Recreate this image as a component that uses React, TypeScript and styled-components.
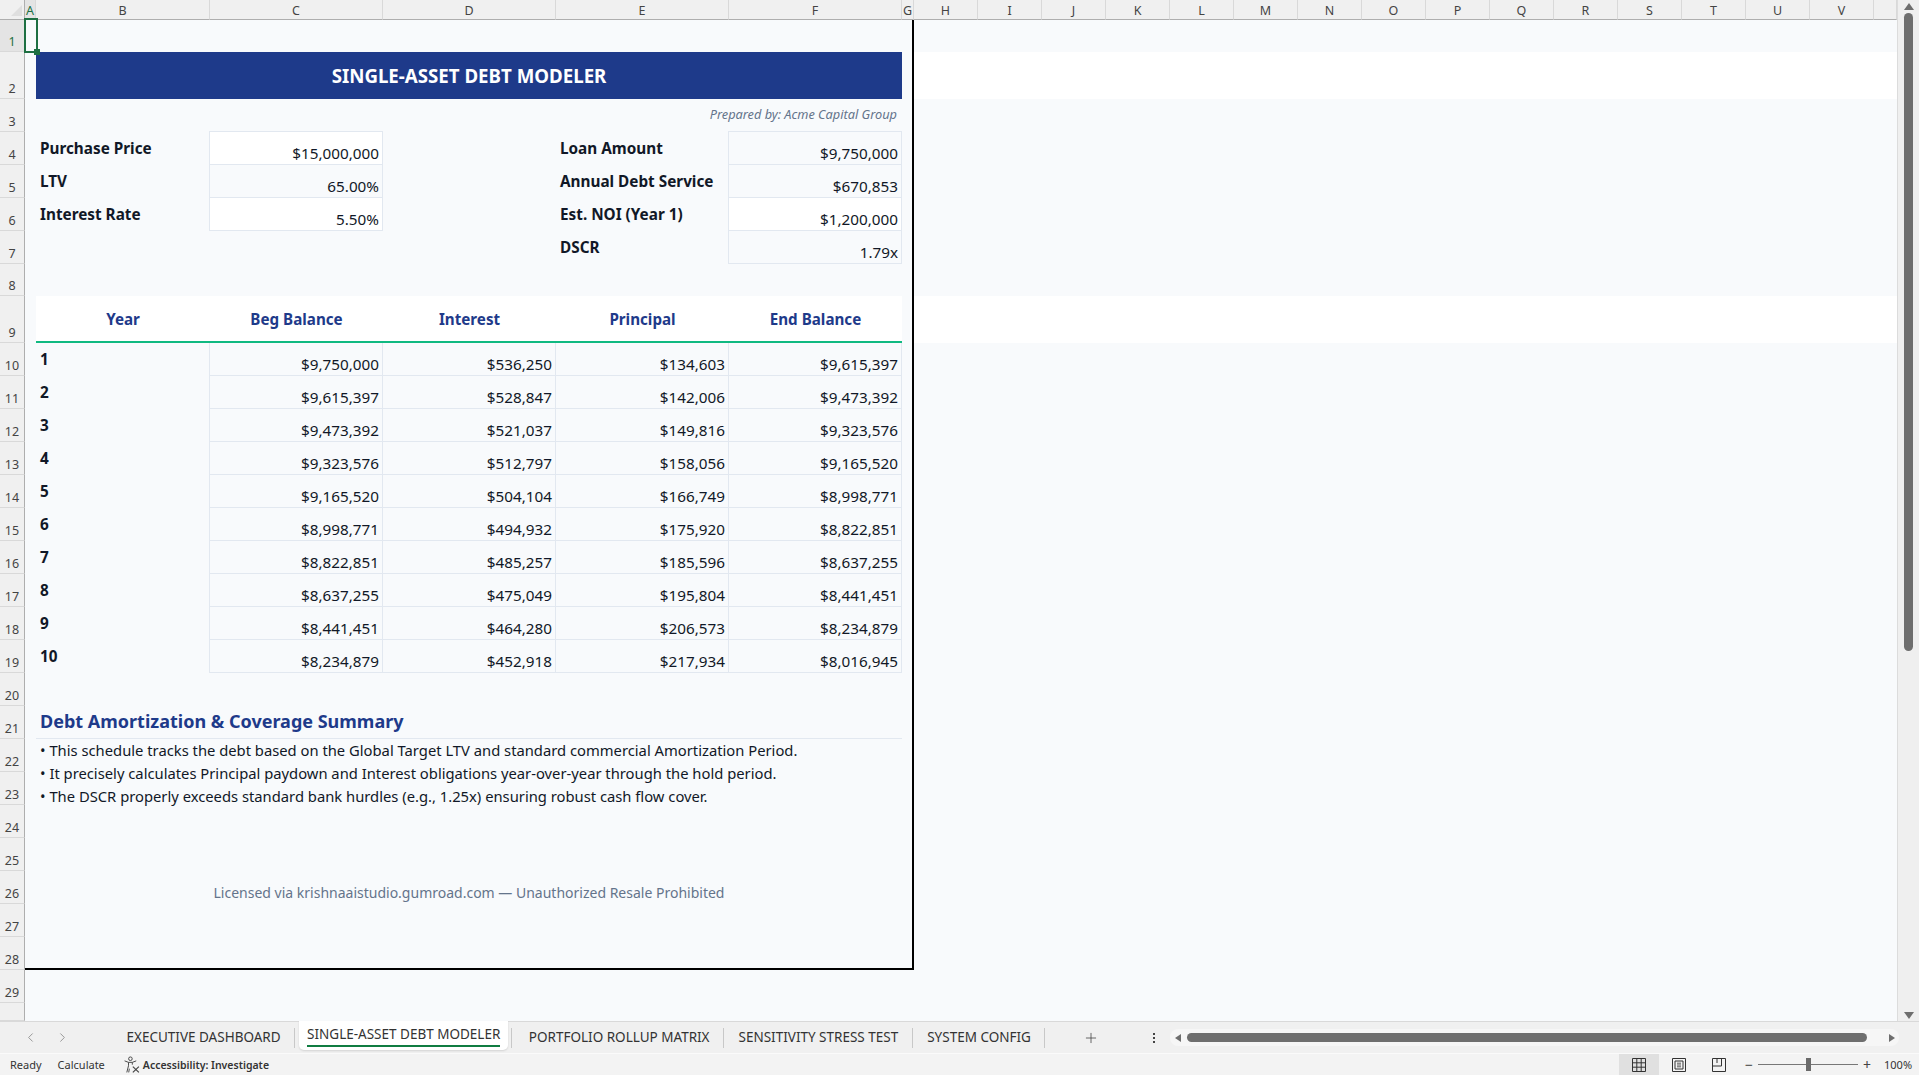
import { FC, ReactNode } from 'react';
import styled, { createGlobalStyle, css } from 'styled-components';
import { ChevronLeft, ChevronRight, Plus } from 'lucide-react';

const FONT = '"Noto Sans", "Open Sans", sans-serif';

const LETTERS = ['A', 'B', 'C', 'D', 'E', 'F', 'G', 'H', 'I', 'J', 'K', 'L', 'M', 'N', 'O', 'P', 'Q', 'R', 'S', 'T', 'U', 'V', ''];

// sheet row heights, row 1 first
const ROW_HEIGHTS = [32, 47, 33, 33, 33, 33, 33, 32, 47, 33, 33, 33, 33, 33, 33, 33, 33, 33, 33, 33, 33, 33, 33, 33, 33, 33, 33, 33, 33, 18];

const INPUTS_LEFT = [
  { row: 4, label: 'Purchase Price', value: '$15,000,000', white: true },
  { row: 5, label: 'LTV', value: '65.00%', white: false },
  { row: 6, label: 'Interest Rate', value: '5.50%', white: true },
];

const INPUTS_RIGHT = [
  { row: 4, label: 'Loan Amount', value: '$9,750,000', white: false },
  { row: 5, label: 'Annual Debt Service', value: '$670,853', white: false },
  { row: 6, label: 'Est. NOI (Year 1)', value: '$1,200,000', white: true },
  { row: 7, label: 'DSCR', value: '1.79x', white: false },
];

const HEADERS = ['Year', 'Beg Balance', 'Interest', 'Principal', 'End Balance'];

const SCHEDULE = [
  ['$9,750,000', '$536,250', '$134,603', '$9,615,397'],
  ['$9,615,397', '$528,847', '$142,006', '$9,473,392'],
  ['$9,473,392', '$521,037', '$149,816', '$9,323,576'],
  ['$9,323,576', '$512,797', '$158,056', '$9,165,520'],
  ['$9,165,520', '$504,104', '$166,749', '$8,998,771'],
  ['$8,998,771', '$494,932', '$175,920', '$8,822,851'],
  ['$8,822,851', '$485,257', '$185,596', '$8,637,255'],
  ['$8,637,255', '$475,049', '$195,804', '$8,441,451'],
  ['$8,441,451', '$464,280', '$206,573', '$8,234,879'],
  ['$8,234,879', '$452,918', '$217,934', '$8,016,945'],
];

const TABS = ['EXECUTIVE DASHBOARD', 'SINGLE-ASSET DEBT MODELER', 'PORTFOLIO ROLLUP MATRIX', 'SENSITIVITY STRESS TEST', 'SYSTEM CONFIG'];

const GlobalStyle = createGlobalStyle`
  html, body {
    margin: 0;
    padding: 0;
    overflow: hidden;
    background: #f0f0f0;
  }
  * {
    box-sizing: border-box;
  }
`;

const Window = styled.div`
  width: 1919px;
  height: 1075px;
  display: flex;
  flex-direction: column;
  overflow: hidden;
  font-family: ${FONT};
  color: #111827;
`;

const Workspace = styled.div`
  height: 1021px;
  display: flex;
`;

const Sheet = styled.div`
  position: relative;
  width: 1897px;
  height: 1021px;
  display: grid;
  grid-template-columns: 25px 11px 174px 173px 173px 173px 173px 12px repeat(15, 64px) 23px;
  grid-template-rows: 20px ${ROW_HEIGHTS.map((h) => `${h}px`).join(' ')};
  background: #f8fafc;
  overflow: hidden;
`;

interface AtProps {
  $row: number;
  $col?: number;
  $span?: number;
  $rows?: number;
}

// $row is the sheet row, $col counts from A = 1
const at = css<AtProps>`
  grid-row: ${({ $row, $rows = 1 }) => `${$row + 1} / span ${$rows}`};
  grid-column: ${({ $col = 1, $span = 1 }) => `${$col + 1} / span ${$span}`};
  min-width: 0;
`;

const Corner = styled.div`
  grid-row: 1;
  grid-column: 1;
  background: #f0f0f0;
  border-bottom: 1px solid #aeaeae;
  border-right: 1px solid #aeaeae;
  display: flex;
  align-items: flex-end;
  justify-content: flex-end;
  padding: 0 2px 3px 0;
`;

const CornerMark = styled.div`
  width: 0;
  height: 0;
  border-style: solid;
  border-width: 0 0 11px 11px;
  border-color: transparent transparent #dfdfdf transparent;
`;

const ColHead = styled.div<{ $index: number; $active?: boolean }>`
  grid-row: 1;
  grid-column: ${({ $index }) => $index + 2};
  display: flex;
  align-items: center;
  justify-content: center;
  padding-top: 2px;
  font-size: 12.5px;
  line-height: 18px;
  color: ${({ $active }) => ($active ? '#1d7044' : '#444')};
  background: ${({ $active }) => ($active ? '#e4e4e4' : '#f0f0f0')};
  border-bottom: 1px solid #aeaeae;
  border-right: 1px solid #d9d9d9;
  overflow: hidden;
`;

const RowHead = styled.div<{ $row: number; $active?: boolean }>`
  grid-row: ${({ $row }) => $row + 1};
  grid-column: 1;
  display: flex;
  align-items: flex-end;
  justify-content: center;
  padding-bottom: 1px;
  font-size: 12.5px;
  line-height: 17px;
  color: ${({ $active }) => ($active ? '#1d7044' : '#444')};
  background: ${({ $active }) => ($active ? '#e4e4e4' : '#f0f0f0')};
  border-right: 1px solid #aeaeae;
  border-bottom: 1px solid #d9d9d9;
`;

const ModelFrame = styled.div`
  grid-row: 2 / span 28;
  grid-column: 2 / span 7;
  border-right: 2px solid #000;
  border-bottom: 2px solid #000;
`;

const WhiteBand = styled.div<{ $row: number }>`
  grid-row: ${({ $row }) => $row + 1};
  grid-column: 9 / -1;
  background: #fff;
`;

const Selection = styled.div`
  position: absolute;
  left: 24px;
  top: 18px;
  width: 14px;
  height: 35px;
  border: 2px solid #1d6f42;
`;

const SelectionHandle = styled.div`
  position: absolute;
  right: -4px;
  bottom: -4px;
  width: 6px;
  height: 6px;
  background: #1d6f42;
`;

const Title = styled.div<AtProps>`
  ${at};
  display: flex;
  align-items: center;
  justify-content: center;
  padding-bottom: 1px;
  background: #1e3a8a;
  color: #fff;
  font-size: 18.7px;
  font-weight: 700;
`;

const Prepared = styled.div<AtProps>`
  ${at};
  display: flex;
  align-items: center;
  justify-content: flex-end;
  padding: 0 5px 3px 0;
  color: #64748b;
  font-size: 12.75px;
  font-style: italic;
`;

const Label = styled.div<AtProps>`
  ${at};
  display: flex;
  align-items: center;
  padding: 0 0 1px 4px;
  font-size: 15.3px;
  font-weight: 700;
  white-space: nowrap;
`;

const Value = styled.div<AtProps & { $white?: boolean }>`
  ${at};
  display: flex;
  align-items: flex-end;
  justify-content: flex-end;
  margin-left: -1px;
  padding-right: 3px;
  font-size: 15.25px;
  line-height: 21px;
  background: ${({ $white }) => ($white ? '#fff' : '#f8fafc')};
  border: 1px solid #e2e8f0;
  border-top: 0;
`;

const TopRule = styled.div<AtProps>`
  ${at};
  height: 1px;
  margin: -1px 0 0 -1px;
  background: #e2e8f0;
  align-self: start;
`;

const TableHead = styled.div<AtProps>`
  ${at};
  display: flex;
  align-items: center;
  justify-content: center;
  background: #fff;
  border-bottom: 2px solid #10b981;
  color: #1e3a8a;
  font-size: 15.2px;
  font-weight: 700;
`;

const SummaryTitle = styled.div<AtProps>`
  ${at};
  display: flex;
  align-items: center;
  padding: 0 0 2px 4px;
  color: #1e3a8a;
  font-size: 18px;
  font-weight: 700;
  border-bottom: 1px solid #e2e8f0;
`;

const Notes = styled.div<AtProps>`
  ${at};
  padding-left: 4px;
  font-size: 14.78px;
  line-height: 23px;
  white-space: nowrap;
`;

const Licence = styled.div<AtProps>`
  ${at};
  display: flex;
  align-items: flex-end;
  justify-content: center;
  padding-bottom: 1px;
  color: #64748b;
  font-size: 14px;
  line-height: 21px;
`;

const VScroll = styled.div`
  flex: 1;
  display: flex;
  flex-direction: column;
  align-items: center;
  background: #efefef;
  border-left: 1px solid #dcdcdc;
  padding: 3px 0 2px;
`;

const VThumb = styled.div`
  width: 9px;
  height: 638px;
  margin-top: 3px;
  border-radius: 5px;
  background: #6e6e6e;
`;

const VSpacer = styled.div`
  flex: 1;
`;

const TabBar = styled.div`
  height: 32px;
  display: flex;
  align-items: stretch;
  position: relative;
  background: #f0f0f0;
  border-top: 1px solid #d9d9d9;
  font-size: 13.5px;
  color: #333;
`;

const TabArrows = styled.div`
  width: 112px;
  padding-left: 23px;
  display: flex;
  align-items: center;
  gap: 17px;
  color: #8c8c8c;
`;

const Tab = styled.div<{ $active?: boolean }>`
  position: relative;
  display: flex;
  align-items: center;
  padding: 0 14.5px 1px;
  white-space: nowrap;
  &::after {
    content: '';
    position: absolute;
    right: 0;
    top: 6px;
    height: 20px;
    width: 1px;
    background: #c8c8c8;
  }
  ${({ $active }) =>
    $active &&
    css`
      height: 29px;
      margin: -1px 6px 0 4px;
      padding: 0 8px;
      background: #fff;
      border-radius: 0 0 5px 5px;
      box-shadow: 0 1px 2px rgba(0, 0, 0, 0.12);
      &::after {
        right: -4px;
        top: 7px;
      }
    `}
`;

const ActiveLabel = styled.span`
  display: block;
  line-height: 21px;
  border-bottom: 2px solid #107c41;
`;

const TabPlus = styled.div`
  width: 92px;
  display: flex;
  align-items: center;
  justify-content: center;
  color: #444;
`;

const TabDots = styled.div`
  width: 34px;
  display: flex;
  flex-direction: column;
  align-items: center;
  justify-content: center;
  gap: 2px;
`;

const Dot = styled.span`
  width: 2px;
  height: 2px;
  background: #444;
`;

const HScrollTrack = styled.div`
  position: absolute;
  left: 1170px;
  top: 7px;
  width: 729px;
  height: 17px;
  display: flex;
  align-items: center;
  border-radius: 8px;
  background: #f6f6f6;
`;

const HThumb = styled.div`
  position: absolute;
  left: 17px;
  width: 680px;
  height: 9px;
  border-radius: 5px;
  background: #6e6e6e;
`;

const ArrowH = styled.div<{ $right?: boolean }>`
  position: absolute;
  ${({ $right }) => ($right ? 'right: 4px;' : 'left: 5px;')}
  width: 0;
  height: 0;
  border-style: solid;
  border-width: 4.5px 0 4.5px 6px;
  border-color: transparent transparent transparent #6e6e6e;
  ${({ $right }) => !$right && 'transform: scaleX(-1);'}
`;

const ArrowV = styled.div<{ $down?: boolean }>`
  width: 0;
  height: 0;
  flex: none;
  border-style: solid;
  border-width: 0 5.5px 7px 5.5px;
  border-color: transparent transparent #6e6e6e transparent;
  ${({ $down }) => $down && 'transform: scaleY(-1);'}
`;

const StatusBar = styled.div`
  height: 22px;
  display: flex;
  align-items: center;
  background: #f3f3f3;
  border-top: 1px solid #fafafa;
  font-size: 11px;
  color: #333;
`;

const StatusText = styled.span<{ $left: number; $bold?: boolean }>`
  margin-left: ${({ $left }) => $left}px;
  font-size: ${({ $bold }) => ($bold ? 10.5 : 11)}px;
  font-weight: ${({ $bold }) => ($bold ? 600 : 400)};
  white-space: nowrap;
`;

const StatusRight = styled.div`
  margin-left: auto;
  height: 100%;
  display: flex;
  align-items: center;
`;

const ViewButton = styled.div<{ $active?: boolean }>`
  width: 40px;
  height: 100%;
  display: flex;
  align-items: center;
  justify-content: center;
  background: ${({ $active }) => ($active ? '#e0e0e0' : 'transparent')};
`;

const ZoomControl = styled.div`
  width: 128px;
  margin-left: 6px;
  padding-right: 2px;
  display: flex;
  align-items: center;
  justify-content: space-between;
  font-size: 14px;
  color: #444;
`;

const ZoomTrack = styled.div`
  position: relative;
  width: 100px;
  height: 1px;
  background: #777;
`;

const ZoomThumb = styled.div`
  position: absolute;
  left: 48px;
  top: -6px;
  width: 5px;
  height: 13px;
  background: #6a6a6a;
`;

const ZoomValue = styled.span`
  width: 35px;
  margin-left: 11px;
  white-space: nowrap;
`;

const AccessibilityIcon: FC = () => (
  <svg width="18" height="18" viewBox="0 0 17 17" fill="none" stroke="#444" strokeWidth="0.9" style={{ marginLeft: 18 }}>
    <circle cx="7" cy="2.6" r="1.7" />
    <path d="M1.5 4.6 L5.2 6 H8.8 L12.5 4.6" />
    <path d="M5.2 6 V9.2 L3.6 15.5 M8.8 6 V8.2" />
    <path d="M9.3 10 L15 15.5 M15 10 L9.3 15.5" strokeWidth="1.1" />
    <path d="M6 12 L5.4 15.5" />
  </svg>
);

const GridViewIcon: FC = () => (
  <svg width="14" height="14" viewBox="0 0 14 14" fill="none" stroke="#333">
    <path d="M.5.5h13v13H.5zM.5 4.8h13M.5 9.2h13M4.8.5v13M9.2.5v13" />
  </svg>
);

const PageViewIcon: FC = () => (
  <svg width="14" height="14" viewBox="0 0 14 14" fill="none" stroke="#333">
    <path d="M.5.5h13v13H.5z" />
    <path d="M3 3h8v8H3z" />
    <path d="M5 5.2h4M5 7h4M5 8.8h4" strokeWidth="0.8" />
  </svg>
);

const BreakViewIcon: FC = () => (
  <svg width="14" height="14" viewBox="0 0 14 14" fill="none" stroke="#333">
    <path d="M.5.5h13v13H.5zM.5 8h9V.5M5 .5v4.5" />
  </svg>
);

const App: FC = () => {
  const rowNumbers = ROW_HEIGHTS.map((_, i) => i + 1);
  const renderInput = (
    item: { row: number; label: string; value: string; white: boolean },
    labelCol: number,
    valueCol: number,
  ): ReactNode => (
    <div key={item.label} style={{ display: 'contents' }}>
      <Label $row={item.row} $col={labelCol}>
        {item.label}
      </Label>
      <Value $row={item.row} $col={valueCol} $white={item.white}>
        {item.value}
      </Value>
    </div>
  );

  return (
    <Window>
      <GlobalStyle />
      <Workspace>
        <Sheet>
          <Corner>
            <CornerMark />
          </Corner>
          {LETTERS.map((letter, i) => (
            <ColHead key={i} $index={i} $active={i === 0}>
              {letter}
            </ColHead>
          ))}
          {rowNumbers.map((n) => (
            <RowHead key={n} $row={n} $active={n === 1}>
              {n === 30 ? '' : n}
            </RowHead>
          ))}

          <ModelFrame />
          <WhiteBand $row={2} />
          <WhiteBand $row={9} />

          <Title $row={2} $col={2} $span={5}>
            SINGLE-ASSET DEBT MODELER
          </Title>
          <Prepared $row={3} $col={4} $span={3}>
            Prepared by: Acme Capital Group
          </Prepared>

          {INPUTS_LEFT.map((item) => renderInput(item, 2, 3))}
          {INPUTS_RIGHT.map((item) => renderInput(item, 5, 6))}
          <TopRule $row={4} $col={3} />
          <TopRule $row={4} $col={6} />

          {HEADERS.map((h, i) => (
            <TableHead key={h} $row={9} $col={i + 2}>
              {h}
            </TableHead>
          ))}
          {SCHEDULE.map((row, r) => (
            <div key={r} style={{ display: 'contents' }}>
              <Label $row={r + 10} $col={2}>
                {r + 1}
              </Label>
              {row.map((v, c) => (
                <Value key={c} $row={r + 10} $col={c + 3}>
                  {v}
                </Value>
              ))}
            </div>
          ))}

          <SummaryTitle $row={21} $col={2} $span={5}>
            Debt Amortization &amp; Coverage Summary
          </SummaryTitle>
          <Notes $row={22} $col={2} $span={5} $rows={3}>
            • This schedule tracks the debt based on the Global Target LTV and standard commercial Amortization Period.
            <br />
            • It precisely calculates Principal paydown and Interest obligations year-over-year through the hold period.
            <br />
            • The DSCR properly exceeds standard bank hurdles (e.g., 1.25x) ensuring robust cash flow cover.
          </Notes>
          <Licence $row={26} $col={2} $span={5}>
            Licensed via krishnaaistudio.gumroad.com — Unauthorized Resale Prohibited
          </Licence>

          <Selection>
            <SelectionHandle />
          </Selection>
        </Sheet>
        <VScroll>
          <ArrowV />
          <VThumb />
          <VSpacer />
          <ArrowV $down />
        </VScroll>
      </Workspace>

      <TabBar>
        <TabArrows>
          <ChevronLeft size={15} strokeWidth={1.4} />
          <ChevronRight size={15} strokeWidth={1.4} />
        </TabArrows>
        {TABS.map((tab, i) =>
          i === 1 ? (
            <Tab key={tab} $active>
              <ActiveLabel>{tab}</ActiveLabel>
            </Tab>
          ) : (
            <Tab key={tab}>{tab}</Tab>
          ),
        )}
        <TabPlus>
          <Plus size={16} strokeWidth={1.2} />
        </TabPlus>
        <TabDots>
          <Dot />
          <Dot />
          <Dot />
        </TabDots>
        <HScrollTrack>
          <ArrowH />
          <HThumb />
          <ArrowH $right />
        </HScrollTrack>
      </TabBar>

      <StatusBar>
        <StatusText $left={10}>Ready</StatusText>
        <StatusText $left={16}>Calculate</StatusText>
        <AccessibilityIcon />
        <StatusText $left={2} $bold>
          Accessibility: Investigate
        </StatusText>
        <StatusRight>
          <ViewButton $active>
            <GridViewIcon />
          </ViewButton>
          <ViewButton>
            <PageViewIcon />
          </ViewButton>
          <ViewButton>
            <BreakViewIcon />
          </ViewButton>
          <ZoomControl>
            <span>−</span>
            <ZoomTrack>
              <ZoomThumb />
            </ZoomTrack>
            <span>+</span>
          </ZoomControl>
          <ZoomValue>100%</ZoomValue>
        </StatusRight>
      </StatusBar>
    </Window>
  );
};

export default App;
